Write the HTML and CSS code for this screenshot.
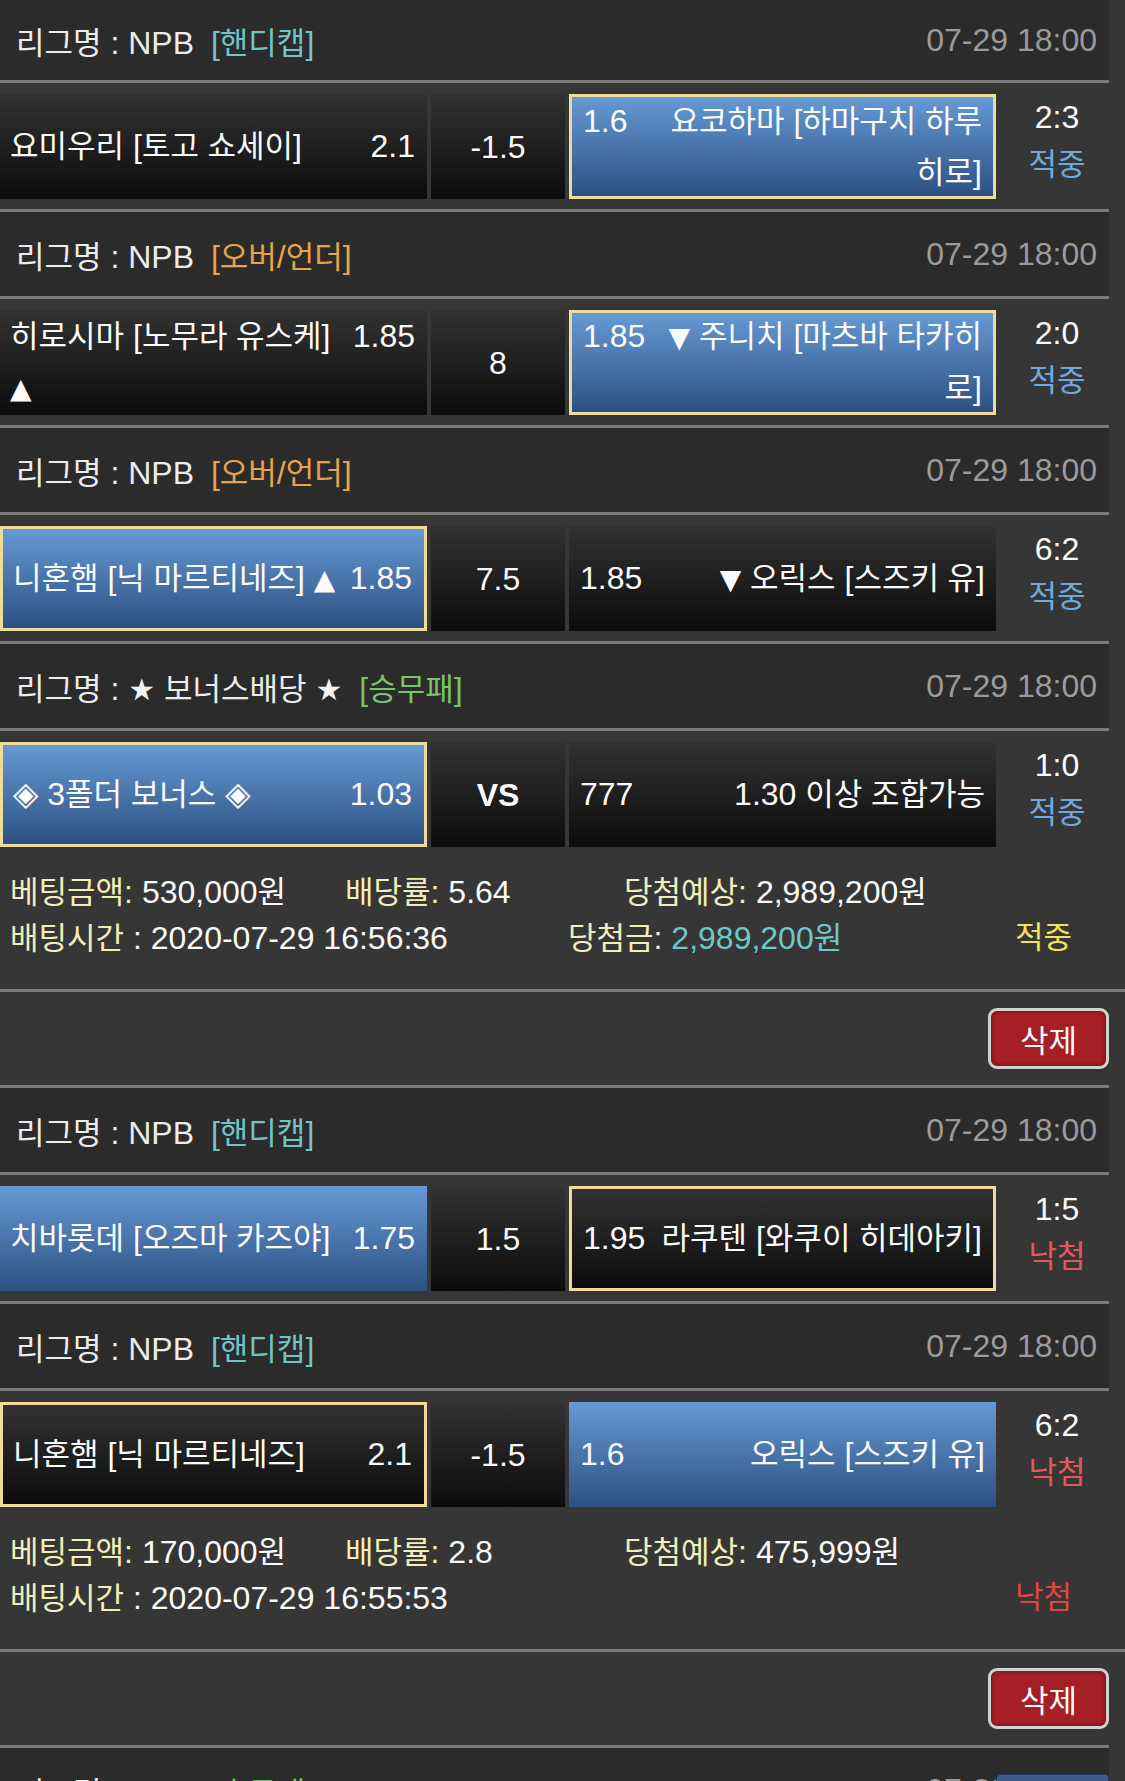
FILE: index.html
```html
<!DOCTYPE html>
<html lang="ko">
<head>
<meta charset="utf-8">
<title>베팅내역</title>
<link rel="stylesheet" href="styles.css">
</head>
<body>
<div class="page">

  <section class="bet">
    <div class="lg first">
      <div class="lname"><span class="k">리그명</span> : NPB <span class="tag teal">[<span class="k">핸디캡</span>]</span></div>
      <div class="ltime">07-29 18:00</div>
    </div>
    <div class="match">
      <div class="cell home"><div class="in"><span class="o">2.1</span><span class="k">요미우리</span> [<span class="k">토고 쇼세이</span>]</div></div>
      <div class="cell mid">-1.5</div>
      <div class="cell away blue sel"><div class="in"><span class="o">1.6</span><span class="k">요코하마</span> [<span class="k">하마구치 하루</span><br><span class="k">히로</span>]</div></div>
      <div class="score"><div>2:3</div><div class="k win">적중</div></div>
    </div>

    <div class="lg">
      <div class="lname"><span class="k">리그명</span> : NPB <span class="tag orange">[<span class="k">오버</span>/<span class="k">언더</span>]</span></div>
      <div class="ltime">07-29 18:00</div>
    </div>
    <div class="match">
      <div class="cell home"><div class="in"><span class="o">1.85</span><span class="k">히로시마</span> [<span class="k">노무라 유스케</span>]<br><span class="tri">▲</span></div></div>
      <div class="cell mid">8</div>
      <div class="cell away blue sel"><div class="in"><span class="o">1.85</span><span class="tri">▼</span> <span class="k">주니치</span> [<span class="k">마츠바 타카히</span><br><span class="k">로</span>]</div></div>
      <div class="score"><div>2:0</div><div class="k win">적중</div></div>
    </div>

    <div class="lg">
      <div class="lname"><span class="k">리그명</span> : NPB <span class="tag orange">[<span class="k">오버</span>/<span class="k">언더</span>]</span></div>
      <div class="ltime">07-29 18:00</div>
    </div>
    <div class="match">
      <div class="cell home blue sel"><div class="in"><span class="o">1.85</span><span class="k">니혼햄</span> [<span class="k">닉 마르티네즈</span>] <span class="tri">▲</span></div></div>
      <div class="cell mid">7.5</div>
      <div class="cell away"><div class="in"><span class="o">1.85</span><span class="tri">▼</span> <span class="k">오릭스</span> [<span class="k">스즈키 유</span>]</div></div>
      <div class="score"><div>6:2</div><div class="k win">적중</div></div>
    </div>

    <div class="lg">
      <div class="lname"><span class="k">리그명</span> : <span class="star">★</span> <span class="k">보너스배당</span> <span class="star">★</span> <span class="tag green">[<span class="k">승무패</span>]</span></div>
      <div class="ltime">07-29 18:00</div>
    </div>
    <div class="match last">
      <div class="cell home blue sel"><div class="in"><span class="o">1.03</span><span class="dia">◈</span> 3<span class="k">폴더 보너스</span> <span class="dia">◈</span></div></div>
      <div class="cell mid vs">VS</div>
      <div class="cell away"><div class="in"><span class="o">777</span>1.30 <span class="k">이상 조합가능</span></div></div>
      <div class="score"><div>1:0</div><div class="k win">적중</div></div>
    </div>

    <div class="summary">
      <div class="sl">
        <div class="c1"><span class="lb"><span class="k">베팅금액</span>:</span> 530,000<span class="k">원</span></div>
        <div class="c2"><span class="lb"><span class="k">배당률</span>:</span> 5.64</div>
        <div><span class="lb"><span class="k">당첨예상</span>:</span> 2,989,200<span class="k">원</span></div>
      </div>
      <div class="sl">
        <div class="d1"><span class="lb k">배팅시간</span> : 2020-07-29 16:56:36</div>
        <div class="d2"><span class="lb"><span class="k">당첨금</span>:</span> <span class="prize">2,989,200<span class="k">원</span></span></div>
        <div class="k res-win">적중</div>
      </div>
    </div>
    <div class="actions"><button class="del" type="button"><span class="k">삭제</span></button></div>
  </section>

  <section class="bet">
    <div class="lg">
      <div class="lname"><span class="k">리그명</span> : NPB <span class="tag teal">[<span class="k">핸디캡</span>]</span></div>
      <div class="ltime">07-29 18:00</div>
    </div>
    <div class="match">
      <div class="cell home blue"><div class="in"><span class="o">1.75</span><span class="k">치바롯데</span> [<span class="k">오즈마 카즈야</span>]</div></div>
      <div class="cell mid">1.5</div>
      <div class="cell away sel"><div class="in"><span class="o">1.95</span><span class="k">라쿠텐</span> [<span class="k">와쿠이 히데아키</span>]</div></div>
      <div class="score"><div>1:5</div><div class="k lose">낙첨</div></div>
    </div>

    <div class="lg">
      <div class="lname"><span class="k">리그명</span> : NPB <span class="tag teal">[<span class="k">핸디캡</span>]</span></div>
      <div class="ltime">07-29 18:00</div>
    </div>
    <div class="match last">
      <div class="cell home sel"><div class="in"><span class="o">2.1</span><span class="k">니혼햄</span> [<span class="k">닉 마르티네즈</span>]</div></div>
      <div class="cell mid">-1.5</div>
      <div class="cell away blue"><div class="in"><span class="o">1.6</span><span class="k">오릭스</span> [<span class="k">스즈키 유</span>]</div></div>
      <div class="score"><div>6:2</div><div class="k lose">낙첨</div></div>
    </div>

    <div class="summary">
      <div class="sl">
        <div class="c1"><span class="lb"><span class="k">베팅금액</span>:</span> 170,000<span class="k">원</span></div>
        <div class="c2"><span class="lb"><span class="k">배당률</span>:</span> 2.8</div>
        <div><span class="lb"><span class="k">당첨예상</span>:</span> 475,999<span class="k">원</span></div>
      </div>
      <div class="sl">
        <div class="d1"><span class="lb k">배팅시간</span> : 2020-07-29 16:55:53</div>
        <div class="d2"></div>
        <div class="k res-lose">낙첨</div>
      </div>
    </div>
    <div class="actions"><button class="del" type="button"><span class="k">삭제</span></button></div>
  </section>

  <section class="bet">
    <div class="lg">
      <div class="lname"><span class="k">리그명</span> : MLB <span class="tag green">[<span class="k">승무패</span>]</span></div>
      <div class="ltime">07-29 18:00</div>
      <div class="badge"></div>
    </div>
  </section>

</div>
</body>
</html>
```

FILE: styles.css
```css
* { box-sizing: border-box; }

html, body {
  margin: 0;
  padding: 0;
}

body {
  background: #363636;
  color: #fafafa;
  font-family: "Liberation Sans", "Noto Sans CJK KR", sans-serif;
  font-size: 32px;
  width: 1125px;
  overflow: hidden;
}

.page {
  width: 1125px;
}

.k {
  font-size: 31px;
  letter-spacing: 0;
}

/* league header */
.lg {
  position: relative;
  width: 1109px;
  height: 87px;
  background: #2b2b2b;
  border-bottom: 3px solid #7b7b7b;
  display: flex;
  align-items: center;
  justify-content: space-between;
  padding: 0 12px 0 16px;
  color: #ececec;
  white-space: nowrap;
}

.lg.first {
  height: 83px;
}

.tag {
  margin-left: 8px;
}

.teal { color: #6fc6c6; }
.orange { color: #e8a24b; }
.green { color: #78c46a; }

.ltime {
  color: #9b9b9b;
}

.star {
  font-family: "DejaVu Sans", sans-serif;
  font-size: 30px;
  color: #f2f2f2;
}

.badge {
  position: absolute;
  right: 0;
  top: 26px;
  width: 113px;
  height: 40px;
  border-radius: 4px;
  background: linear-gradient(#3c5d8c, #2a4670);
  border: 1px solid #24395a;
}

/* match row */
.match {
  width: 1109px;
  display: flex;
  padding: 11px 0 10px;
  border-bottom: 3px solid #7b7b7b;
}

.match.last {
  border-bottom: 0;
}

.cell {
  height: 105px;
  display: flex;
  align-items: center;
  background: linear-gradient(#323232, #0c0c0c);
  line-height: 50px;
  color: #fafafa;
}

.cell.blue {
  background: linear-gradient(#6699d3, #2d5083);
}

.cell.sel {
  border: 3px solid #efdc9d;
}

.home {
  width: 427px;
  padding: 0 12px 0 10px;
}

.mid {
  width: 134px;
  margin: 0 4px;
  justify-content: center;
}

.mid.vs {
  font-weight: bold;
}

.away {
  width: 427px;
  padding: 0 11px;
}

.in {
  width: 100%;
  white-space: nowrap;
}

.home .o {
  float: right;
}

.away .in {
  text-align: right;
}

.away .o {
  float: left;
}

.tri {
  font-family: "DejaVu Sans", sans-serif;
  font-size: 28px;
}

.dia {
  font-family: "DejaVu Sans", sans-serif;
  font-size: 33px;
}

.score {
  width: 113px;
  height: 105px;
  padding: 0 0 12px 9px;
  display: flex;
  flex-direction: column;
  align-items: center;
  justify-content: center;
  line-height: 47px;
}

.win { color: #6fa7df; }
.lose { color: #e05a5a; }

/* summary */
.summary {
  width: 1125px;
  padding: 12px 10px 28px;
  border-bottom: 3px solid #7b7b7b;
  line-height: 46px;
  color: #fafafa;
}

.sl {
  display: flex;
  white-space: nowrap;
  height: 46px;
}

.c1 { width: 335px; }
.c2 { width: 279px; }
.d1 { width: 558px; }
.d2 { width: 447px; }

.lb { color: #f2eeb9; }
.prize { color: #6cc9c9; }
.res-win { color: #f2e15c; }
.res-lose { color: #e0453e; }

/* action row */
.actions {
  width: 1109px;
  height: 96px;
  border-bottom: 3px solid #7b7b7b;
  display: flex;
  justify-content: flex-end;
  align-items: center;
}

.del {
  width: 121px;
  height: 61px;
  margin: 0;
  padding: 0;
  background: #a51f25;
  border: 3px solid #d2d2d2;
  border-radius: 9px;
  color: #fafafa;
  font-family: "Liberation Sans", "Noto Sans CJK KR", sans-serif;
  display: flex;
  align-items: center;
  justify-content: center;
  box-shadow: inset 0 0 5px rgba(0, 0, 0, 0.45);
}
```
